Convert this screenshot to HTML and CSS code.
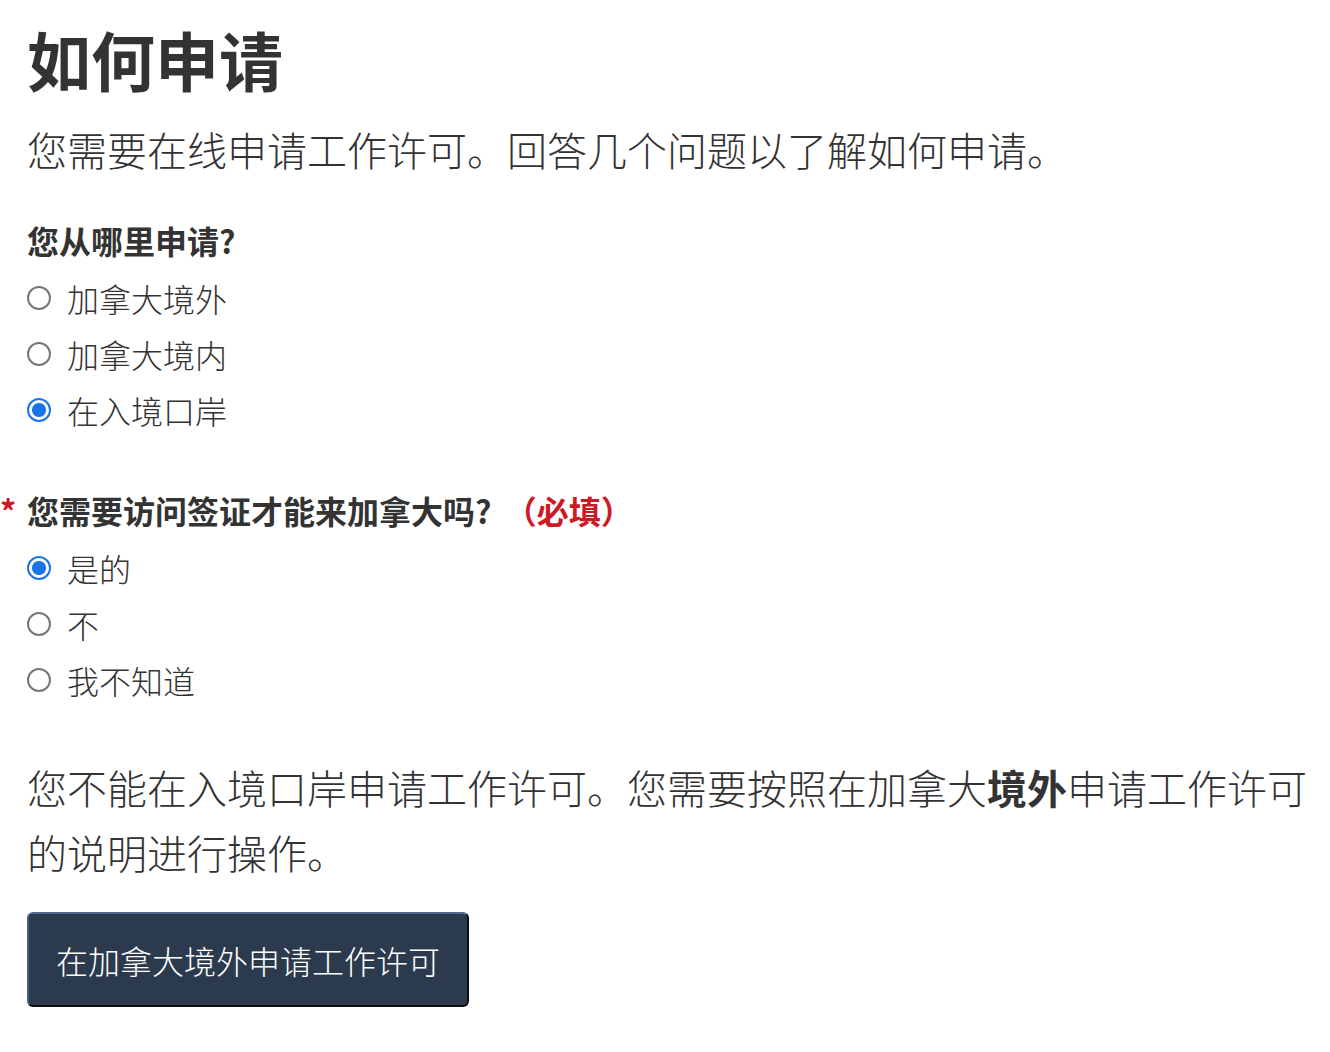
FILE: index.html
```html
<!DOCTYPE html>
<html lang="zh-CN">
<head>
<meta charset="utf-8">
<title>如何申请</title>
<link rel="stylesheet" href="styles.css">
</head>
<body>
<main class="page">
  <h1 class="title">如何申请</h1>
  <p class="lead">您需要在线申请工作许可。回答几个问题以了解如何申请。</p>

  <fieldset class="group group-first">
    <legend class="question">您从哪里申请?</legend>
    <label class="option"><input type="radio" name="where" class="radio"><span>加拿大境外</span></label>
    <label class="option"><input type="radio" name="where" class="radio"><span>加拿大境内</span></label>
    <label class="option"><input type="radio" name="where" class="radio" checked><span>在入境口岸</span></label>
  </fieldset>

  <fieldset class="group group-second">
    <legend class="question"><span class="req-star">*</span>您需要访问签证才能来加拿大吗? <span class="req-text">（必填）</span></legend>
    <label class="option"><input type="radio" name="visa" class="radio" checked><span>是的</span></label>
    <label class="option"><input type="radio" name="visa" class="radio"><span>不</span></label>
    <label class="option"><input type="radio" name="visa" class="radio"><span>我不知道</span></label>
  </fieldset>

  <p class="result">您不能在入境口岸申请工作许可。您需要按照在加拿大<strong>境外</strong>申请工作许可的说明进行操作。</p>

  <button type="button" class="btn-primary">在加拿大境外申请工作许可</button>
</main>
</body>
</html>
```

FILE: styles.css
```css
html, body {
  margin: 0;
  padding: 0;
  background: #ffffff;
}

body {
  font-family: "Noto Sans CJK SC", "Noto Sans", "Liberation Sans", sans-serif;
  color: #333333;
}

.page {
  padding: 0 12px 0 27px;
}

.title {
  margin: 18px 0 0 0;
  font-size: 64px;
  line-height: 80px;
  font-weight: 700;
}

.lead {
  margin: 21px 0 0 0;
  font-size: 40px;
  line-height: 60px;
  font-weight: 300;
}

.group {
  margin: 0;
  padding: 0;
  border: 0;
  min-width: 0;
}

.group-first {
  margin-top: 37px;
}

.group-second {
  margin-top: 48px;
}

.question {
  padding: 0;
  margin: 0 0 6px 0;
  font-size: 32px;
  line-height: 48px;
  font-weight: 700;
}

.req-star {
  display: inline-block;
  width: 27px;
  margin-left: -27px;
  color: #cc1a25;
}

.req-text {
  color: #cc1a25;
  margin-left: 6px;
}

.option {
  display: flex;
  align-items: center;
  height: 56px;
  font-size: 32px;
  line-height: 48px;
  font-weight: 300;
  cursor: pointer;
}

.radio {
  appearance: none;
  -webkit-appearance: none;
  box-sizing: border-box;
  width: 24px;
  height: 24px;
  margin: 0 16px 0 0;
  border: 2px solid #767676;
  border-radius: 50%;
  background: #ffffff;
  flex: none;
}

.radio:checked {
  border-color: #1a73e8;
  background: radial-gradient(circle, #1a73e8 0 6.5px, #ffffff 7.5px);
}

.result {
  margin: 47px 0 0 0;
  font-size: 40px;
  line-height: 65px;
  font-weight: 300;
}

.result strong {
  font-weight: 700;
}

.btn-primary {
  display: inline-block;
  margin-top: 27px;
  box-sizing: border-box;
  height: 95px;
  padding: 0 27px;
  font-family: inherit;
  font-size: 32px;
  line-height: 48px;
  font-weight: 300;
  color: #ffffff;
  background: #2b3a4d;
  border: 2px solid;
  border-color: #506a89 #0d0d0d #0d0d0d #46607e;
  border-radius: 6px;
  cursor: pointer;
}
```
